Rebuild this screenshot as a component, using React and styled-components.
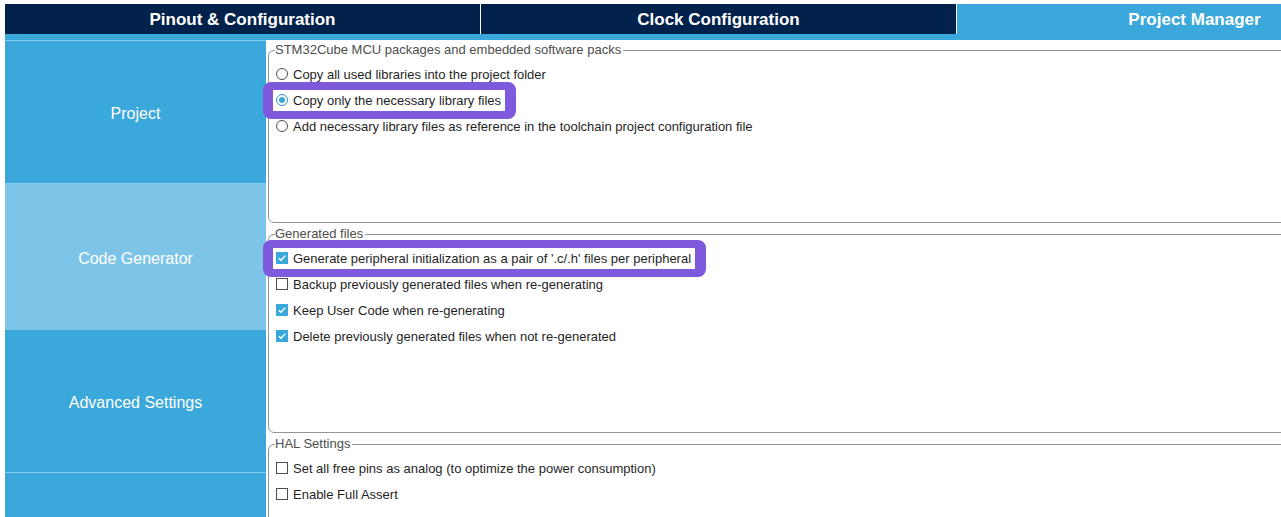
import React from 'react'
import styled, { createGlobalStyle } from 'styled-components'

const GlobalStyle = createGlobalStyle`
    html, body {
        margin: 0;
        padding: 0;
        background: #fff;
        overflow: hidden;
    }
    body {
        font-family: "Liberation Sans", Arial, sans-serif;
    }
`

const tabs = [
    { label: 'Pinout & Configuration' },
    { label: 'Clock Configuration' },
    { label: 'Project Manager', active: true },
]

const sideItems = [
    { label: 'Project' },
    { label: 'Code Generator', active: true },
    { label: 'Advanced Settings' },
    { label: '' },
]

const packOptions = [
    { label: 'Copy all used libraries into the project folder' },
    { label: 'Copy only the necessary library files', checked: true, mark: true },
    { label: 'Add necessary library files as reference in the toolchain project configuration file' },
]

const generatedOptions = [
    { label: "Generate peripheral initialization as a pair of '.c/.h' files per peripheral", checked: true, mark: true },
    { label: 'Backup previously generated files when re-generating' },
    { label: 'Keep User Code when re-generating', checked: true },
    { label: 'Delete previously generated files when not re-generated', checked: true },
]

const halOptions = [
    { label: 'Set all free pins as analog (to optimize the power consumption)' },
    { label: 'Enable Full Assert' },
]

function Radio({ checked }) {
    return <RadioBox $checked={checked}>{checked && <RadioDot />}</RadioBox>
}

function Check({ checked }) {
    return (
        <CheckBox $checked={checked}>
            {checked && (
                <svg width="10" height="10" viewBox="0 0 10 10">
                    <path d="M1.8 5.2 L4 7.3 L8.3 2.6" fill="none" stroke="#fff" strokeWidth="1.4" />
                </svg>
            )}
        </CheckBox>
    )
}

function Option({ option, type }) {
    const control = type === 'radio'
        ? <Radio checked={option.checked} />
        : <Check checked={option.checked} />
    const inner = (
        <>
            {control}
            <OptionText>{option.label}</OptionText>
        </>
    )
    return (
        <Row>
            {option.mark ? <Highlight>{inner}</Highlight> : inner}
        </Row>
    )
}

export default function App() {
    return (
        <>
            <GlobalStyle />
            <Page>
                <TabBar>
                    {tabs.map((tab, i) => (
                        <Tab key={i} $active={tab.active} $last={i === tabs.length - 1}>
                            {tab.label}
                        </Tab>
                    ))}
                </TabBar>
                <Strip />
                <Body>
                    <Sidebar>
                        {sideItems.map((item, i) => (
                            <SideItem key={i} $active={item.active}>{item.label}</SideItem>
                        ))}
                    </Sidebar>
                    <Content>
                        <Group $height={180}>
                            <Legend>STM32Cube MCU packages and embedded software packs</Legend>
                            {packOptions.map((o, i) => <Option key={i} option={o} type="radio" />)}
                        </Group>
                        <Group $height={206}>
                            <Legend>Generated files</Legend>
                            {generatedOptions.map((o, i) => <Option key={i} option={o} type="check" />)}
                        </Group>
                        <Group $height={120}>
                            <Legend>HAL Settings</Legend>
                            {halOptions.map((o, i) => <Option key={i} option={o} type="check" />)}
                        </Group>
                    </Content>
                </Body>
            </Page>
        </>
    )
}

const Page = styled.div`
    width: 1281px;
    height: 517px;
    overflow: hidden;
    box-sizing: border-box;
    padding: 4px 0 0 5px;
    background: #fff;
`

const TabBar = styled.div`
    display: flex;
    height: 30px;
    background: #03224b;
`

const Tab = styled.div`
    flex: 0 0 ${p => p.$last ? 475 : 476}px;
    box-sizing: border-box;
    padding-top: 2px;
    display: flex;
    align-items: center;
    justify-content: center;
    color: #fff;
    font-size: 17px;
    font-weight: 700;
    background: ${p => p.$active ? '#3aa8db' : '#03224b'};
    border-right: ${p => p.$last ? 'none' : '1px solid #fff'};
`

const Strip = styled.div`
    height: 6px;
    background: #3aa8db;
    width: 1400px;
`

const Body = styled.div`
    display: flex;
    align-items: flex-start;
`

const Sidebar = styled.div`
    flex: 0 0 261px;
    display: flex;
    flex-direction: column;
    background: #3aa8db;
    border-top: 1px solid #86cbee;
`

const SideItem = styled.div`
    box-sizing: border-box;
    height: ${p => p.$active ? 146 : 143}px;
    padding-top: 3px;
    display: flex;
    align-items: center;
    justify-content: center;
    color: #fff;
    font-size: 16px;
    background: ${p => p.$active ? '#7dc5e8' : '#3aa8db'};
    border-bottom: ${p => p.$active ? 'none' : '1px solid #86cbee'};
`

const Content = styled.div`
    flex: 1;
    padding: 3px 0 0 2px;
    margin-right: -20px;
    display: flex;
    flex-direction: column;
    gap: 4px;
`

const Group = styled.fieldset`
    margin: 0;
    box-sizing: border-box;
    height: ${p => p.$height}px;
    border: 1px solid #8f959a;
    border-radius: 6px;
    padding: 4px 0 0 7px;
    min-width: 0;
`

const Legend = styled.legend`
    padding: 0 2px 0 0;
    margin-left: -1px;
    font-size: 13px;
    color: #4d4d4d;
    line-height: 14px;
`

const Row = styled.div`
    height: 26px;
    display: flex;
    align-items: center;
`

const Highlight = styled.span`
    display: inline-flex;
    align-items: center;
    height: 21px;
    padding: 0 4px 0 3px;
    margin: -8px 0 -8px -13px;
    background: #fff;
    border-style: solid;
    border-color: #7e59dc;
    border-width: 8px 11px 8px 10px;
    border-radius: 8px;
`

const RadioBox = styled.span`
    box-sizing: border-box;
    width: 12px;
    height: 12px;
    border-radius: 50%;
    border: 1px solid ${p => p.$checked ? '#3b8fc4' : '#4f4f4f'};
    background: #fff;
    display: inline-flex;
    align-items: center;
    justify-content: center;
    flex-shrink: 0;
`

const RadioDot = styled.span`
    width: 6px;
    height: 6px;
    border-radius: 50%;
    background: #3aa8db;
`

const CheckBox = styled.span`
    box-sizing: border-box;
    width: 12px;
    height: 12px;
    border: 1px solid ${p => p.$checked ? '#3aa8db' : '#4f4f4f'};
    background: ${p => p.$checked ? '#3aa8db' : '#fff'};
    display: inline-flex;
    align-items: center;
    justify-content: center;
    flex-shrink: 0;
`

const OptionText = styled.span`
    margin-left: 5px;
    font-size: 13px;
    color: #1f1f1f;
    white-space: nowrap;
`
